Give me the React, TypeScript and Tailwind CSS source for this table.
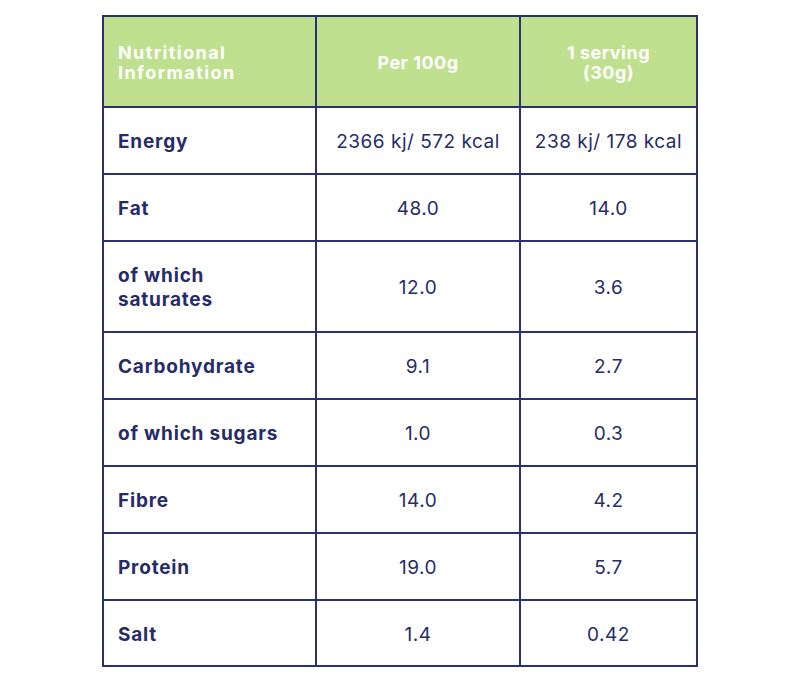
const rows = [
  { label: 'Energy', per100: '2366 kj/ 572 kcal', serving: '238 kj/ 178 kcal' },
  { label: 'Fat', per100: '48.0', serving: '14.0' },
  { label: 'of which saturates', per100: '12.0', serving: '3.6', wrap: true },
  { label: 'Carbohydrate', per100: '9.1', serving: '2.7' },
  { label: 'of which sugars', per100: '1.0', serving: '0.3' },
  { label: 'Fibre', per100: '14.0', serving: '4.2' },
  { label: 'Protein', per100: '19.0', serving: '5.7' },
  { label: 'Salt', per100: '1.4', serving: '0.42' },
]

export default function App() {
  return (
    <div className="w-[800px] h-[686px] bg-white pt-[15px] pl-[102px] font-['Inter',sans-serif] text-[#262c68]">
      <div className="grid w-[596px] grid-cols-[211px_202px_175px] grid-rows-[89px_65px_65px_89px_65px_65px_65px_65px_64px] gap-[2px] bg-[#2b3170] p-[2px]">
        <div className="flex items-center bg-[#bfe08e] pl-[14px] pt-[3px] text-[18px] font-bold leading-[20px] tracking-[1.4px] text-white">
          Nutritional
          <br />
          Information
        </div>
        <div className="flex items-center justify-center bg-[#bfe08e] pt-[3px] text-[18px] font-bold leading-[20px] tracking-[0.5px] text-white">
          Per 100g
        </div>
        <div className="flex items-center justify-center bg-[#bfe08e] pt-[3px] text-center text-[18px] font-bold leading-[20px] tracking-[0.5px] text-white">
          1 serving
          <br />
          (30g)
        </div>

        {rows.map((row) => (
          <>
            <div key={row.label + '-l'} className="flex items-center bg-white pl-[14px] pr-[10px] pt-[3px] text-[19px] font-bold leading-[24px] tracking-[0.8px]">
              {row.wrap ? (
                <span>
                  of which
                  <br />
                  saturates
                </span>
              ) : (
                row.label
              )}
            </div>
            <div key={row.label + '-a'} className="flex items-center justify-center bg-white pt-[3px] text-[19px] leading-[24px] tracking-[0.5px]">
              {row.per100}
            </div>
            <div key={row.label + '-b'} className="flex items-center justify-center bg-white pt-[3px] text-[19px] leading-[24px] tracking-[0.5px]">
              {row.serving}
            </div>
          </>
        ))}
      </div>
    </div>
  )
}
